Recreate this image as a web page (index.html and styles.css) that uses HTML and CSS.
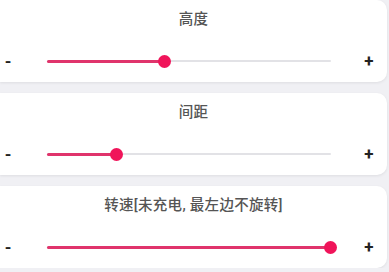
FILE: index.html
```html
<!DOCTYPE html>
<html lang="zh">
<head>
    <meta charset="UTF-8">
    <meta name="viewport" content="width=device-width, initial-scale=1.0">
    <title>设置</title>
    <link rel="stylesheet" href="styles.css">
</head>
<body>
    <div class="list">
        <div class="card">
            <div class="title">高度</div>
            <div class="row">
                <span class="btn">-</span>
                <div class="track"><div class="fill" style="width: 41.5%"><span class="thumb"></span></div></div>
                <span class="btn">+</span>
            </div>
        </div>
        <div class="card">
            <div class="title">间距</div>
            <div class="row">
                <span class="btn">-</span>
                <div class="track"><div class="fill" style="width: 24.6%"><span class="thumb"></span></div></div>
                <span class="btn">+</span>
            </div>
        </div>
        <div class="card">
            <div class="title">转速[未充电, 最左边不旋转]</div>
            <div class="row">
                <span class="btn">-</span>
                <div class="track"><div class="fill" style="width: 100%"><span class="thumb"></span></div></div>
                <span class="btn">+</span>
            </div>
        </div>
    </div>
</body>
</html>
```

FILE: styles.css
```css
body { margin: 0; background: #f0f0f4; font-family: Roboto, "Noto Sans CJK SC", sans-serif; }
.list { display: flex; flex-direction: column; gap: 11px; margin-right: 2px; }
.card { background: #fff; border-radius: 0 10px 10px 0; box-shadow: 0 1px 3px rgba(0,0,0,0.08); padding: 10px 0 9px; height: 63px; }
.title { text-align: center; font-size: 14.5px; line-height: 20px; color: #555; font-weight: 500; letter-spacing: 0.3px; }
.row { display: grid; grid-template-columns: 16px 1fr 16px; align-items: center; height: 24px; margin-top: 19px; padding-right: 10px; }
.btn { text-align: center; font-size: 17px; font-weight: bold; color: #222; }
.track { position: relative; height: 2px; background: #e2e2e6; margin: 0 30px 0 31px; border-radius: 1px; }
.fill { position: relative; height: 3px; top: -0.5px; background: #e0346c; border-radius: 2px; }
.thumb { position: absolute; right: -6px; top: -5px; width: 13px; height: 13px; border-radius: 50%; background: #f0145a; }
```
